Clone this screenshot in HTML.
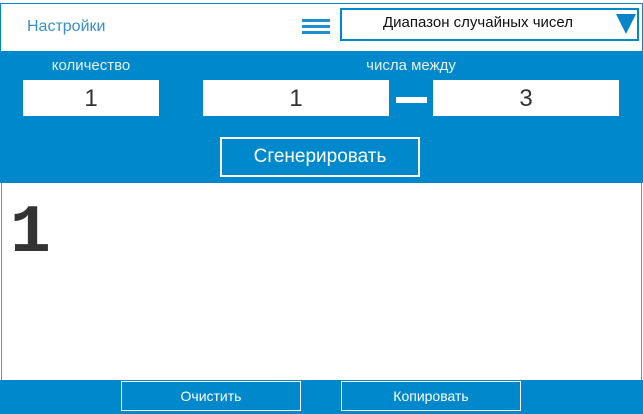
<!DOCTYPE html>
<html><head><meta charset="utf-8"><style>
*{margin:0;padding:0;box-sizing:border-box}
body{width:643px;height:414px;position:relative;background:#fff;font-family:"Liberation Sans",sans-serif;overflow:hidden}
.a{position:absolute}
.blue{background:#0088cc}
.inp{position:absolute;background:#fff;color:#333;font-size:24px;text-align:center;line-height:38px;height:36px}
.lbl{position:absolute;color:#e8f2f8;font-size:15px;text-align:center}
.btn{position:absolute;border:1px solid #fff;color:#fff;text-align:center;font-size:14px}
</style></head><body>
<div class="a" style="left:0;top:3px;width:643px;height:48px;border:1px solid #0088cc;border-bottom:none"></div>
<div class="a" style="left:27px;top:18px;color:#3a8fc8;font-size:16px">Настройки</div>
<div class="a" style="left:302px;top:19px;width:28px;height:3px;background:#1e8fd0"></div>
<div class="a" style="left:302px;top:25px;width:28px;height:3px;background:#1e8fd0"></div>
<div class="a" style="left:302px;top:31px;width:28px;height:3px;background:#1e8fd0"></div>
<div class="a" style="left:340px;top:8px;width:299px;height:33px;border:2px solid #0088cc"></div>
<div class="a" style="left:340px;top:14px;width:276px;text-align:center;font-size:15px;color:#111">Диапазон случайных чисел</div>
<svg class="a" style="left:616px;top:14px" width="20" height="20"><polygon points="0,0 20,0 10,20" fill="#0a84c8"/></svg>
<div class="a blue" style="left:0;top:51px;width:643px;height:132px"></div>
<div class="lbl" style="left:23px;top:57px;width:136px">количество</div>
<div class="lbl" style="left:311px;top:57px;width:200px">числа между</div>
<div class="inp" style="left:23px;top:80px;width:136px">1</div>
<div class="inp" style="left:203px;top:80px;width:186px">1</div>
<div class="a" style="left:396px;top:97px;width:31px;height:6px;background:#fff"></div>
<div class="inp" style="left:433px;top:80px;width:186px">3</div>
<div class="btn" style="left:220px;top:137px;width:200px;height:40px;border-width:2px;font-size:19px;line-height:36px">Сгенерировать</div>
<div class="a" style="left:1px;top:183px;width:641px;height:198px;border:1px solid #888;border-top:none;border-bottom:none"></div>
<div class="a" style="left:10px;top:198px;font-family:'Liberation Mono',monospace;font-weight:bold;font-size:68px;line-height:72px;color:#333">1</div>
<div class="a blue" style="left:0;top:380px;width:643px;height:34px"></div>
<div class="btn" style="left:121px;top:381px;width:180px;height:30px;line-height:28px">Очистить</div>
<div class="btn" style="left:341px;top:381px;width:180px;height:30px;line-height:28px">Копировать</div>
</body></html>
